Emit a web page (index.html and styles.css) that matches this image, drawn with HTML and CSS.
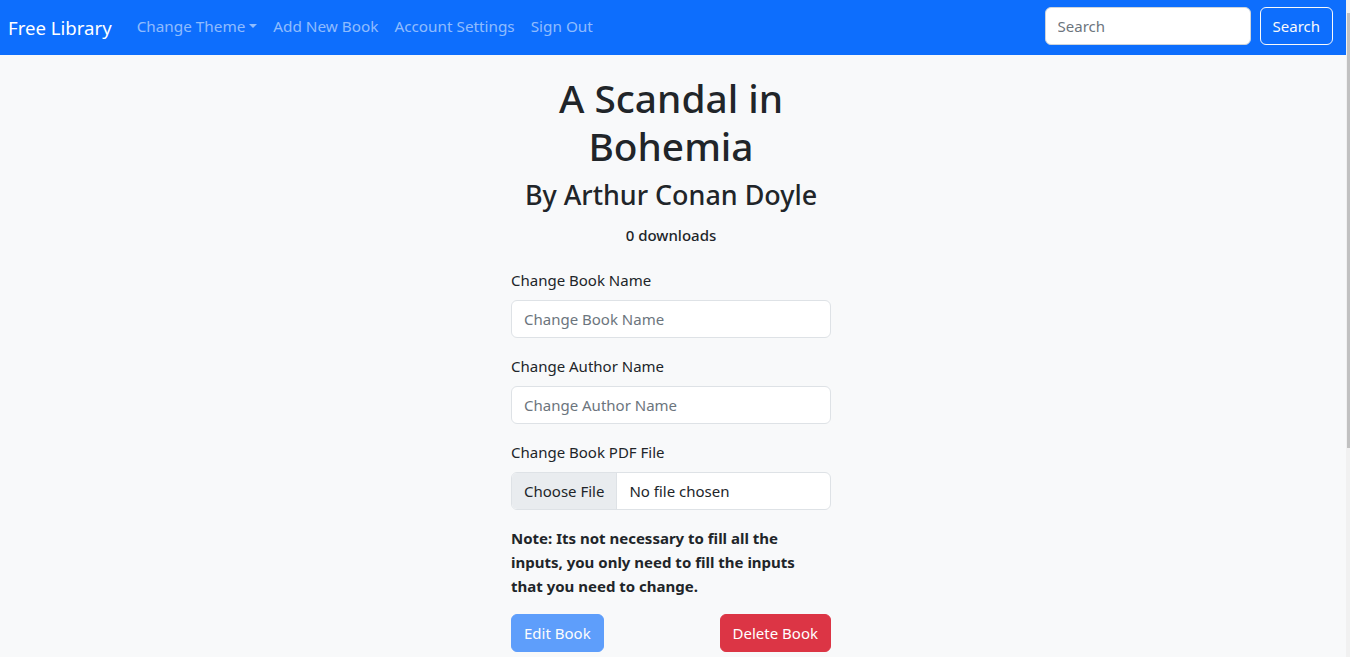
FILE: index.html
```html
<!DOCTYPE html>
<html lang="en">
<head>
<meta charset="utf-8">
<title>Free Library - A Scandal in Bohemia</title>
<link rel="stylesheet" href="styles.css">
</head>
<body>
<div class="page">
  <nav class="navbar">
    <a class="brand" href="#">Free Library</a>
    <ul class="nav-links">
      <li><a class="nav-link dropdown-toggle" href="#">Change Theme</a></li>
      <li><a class="nav-link" href="#">Add New Book</a></li>
      <li><a class="nav-link" href="#">Account Settings</a></li>
      <li><a class="nav-link" href="#">Sign Out</a></li>
    </ul>
    <form class="search-form">
      <input class="search-input" type="search" placeholder="Search">
      <button class="btn btn-outline-light" type="button">Search</button>
    </form>
  </nav>
  <main class="content">
    <h1 class="title">A Scandal in Bohemia</h1>
    <h3 class="author">By Arthur Conan Doyle</h3>
    <h6 class="downloads">0 downloads</h6>
    <form class="edit-form">
      <div class="field">
        <label class="form-label">Change Book Name</label>
        <input class="form-control" type="text" placeholder="Change Book Name">
      </div>
      <div class="field">
        <label class="form-label">Change Author Name</label>
        <input class="form-control" type="text" placeholder="Change Author Name">
      </div>
      <div class="field">
        <label class="form-label">Change Book PDF File</label>
        <div class="file-control">
          <span class="file-button">Choose File</span>
          <span class="file-name">No file chosen</span>
        </div>
      </div>
      <p class="note">Note: Its not necessary to fill all the inputs, you only need to fill the inputs that you need to change.</p>
      <div class="actions">
        <button class="btn btn-primary" type="button" disabled>Edit Book</button>
        <button class="btn btn-danger" type="button">Delete Book</button>
      </div>
    </form>
  </main>
</div>
<div class="scrollbar"><div class="thumb"></div></div>
</body>
</html>
```

FILE: styles.css
```css
* { box-sizing: border-box; }
html, body { height: 100%; }
body {
  margin: 0;
  display: flex;
  overflow: hidden;
  background: #f8f9fa;
  color: #212529;
  font-family: "Noto Sans", "Open Sans", sans-serif;
  font-size: 15px;
  line-height: 24px;
}
.page {
  flex: 1;
  min-width: 0;
  display: flex;
  flex-direction: column;
}
.scrollbar {
  width: 4px;
  background: #f1f1f1;
  padding-top: 13px;
  padding-left: 1px;
}
.thumb {
  height: 435px;
  background: #c1c1c1;
}
.navbar {
  height: 55px;
  flex: none;
  background: #0d6efd;
  display: flex;
  align-items: center;
  padding: 0 13px 3px 8px;
}
.brand {
  color: #fff;
  text-decoration: none;
  font-size: 18.6px;
  line-height: 30px;
  margin-right: 17px;
  padding-top: 3px;
}
.nav-links {
  list-style: none;
  margin: 0;
  padding: 0;
  display: flex;
  flex: 1;
}
.nav-link {
  display: block;
  padding: 8px;
  font-size: 15.3px;
  color: rgba(255,255,255,.55);
  text-decoration: none;
  margin-top: -1px;
}
.dropdown-toggle::after {
  content: "";
  display: inline-block;
  margin-left: .255em;
  vertical-align: .255em;
  border-top: .3em solid;
  border-right: .3em solid transparent;
  border-left: .3em solid transparent;
}
.search-form {
  display: flex;
  gap: 9px;
}
.search-input {
  width: 206px;
  height: 38px;
  padding: 6px 12px;
  border: 1px solid #ced4da;
  border-radius: 6px;
  font: inherit;
  color: #212529;
  background: #fff;
}
.search-input::placeholder { color: #6c757d; }
.btn {
  display: inline-block;
  height: 38px;
  padding: 6px 12px;
  font: inherit;
  border: 1px solid transparent;
  border-radius: 6px;
  background: transparent;
  cursor: pointer;
}
.btn-outline-light { color: #f8f9fa; border-color: #f8f9fa; }
.btn-primary { color: #fff; background: #0d6efd; border-color: #0d6efd; }
.btn-primary:disabled { opacity: .65; }
.btn-danger { color: #fff; background: #dc3545; border-color: #dc3545; }
.content {
  width: 320px;
  margin: 0 auto;
  position: relative;
  left: -2px;
  padding-top: 19px;
  text-align: center;
}
.title {
  margin: 0 0 8px;
  font-size: 38.8px;
  font-weight: 500;
  line-height: 48px;
}
.author {
  margin: 0 0 11px;
  font-size: 26.9px;
  font-weight: 500;
  line-height: 34px;
}
.downloads {
  margin: 0 0 21px;
  font-size: 15px;
  font-weight: 500;
  line-height: 24px;
}
.edit-form { text-align: left; }
.field { margin-bottom: 16px; }
.form-label {
  display: block;
  margin-bottom: 8px;
}
.form-control {
  display: block;
  width: 100%;
  height: 38px;
  padding: 6px 12px;
  font: inherit;
  color: #212529;
  background: #fff;
  border: 1px solid #dee2e6;
  border-radius: 6px;
}
.form-control::placeholder { color: #6c757d; }
.file-control {
  display: flex;
  height: 38px;
  background: #fff;
  border: 1px solid #dee2e6;
  border-radius: 6px;
  overflow: hidden;
}
.file-button {
  display: flex;
  align-items: center;
  padding: 0 12px;
  background: #e9ecef;
  border-right: 1px solid #dee2e6;
}
.file-name {
  display: flex;
  align-items: center;
  padding-left: 12px;
}
.note {
  margin: 0 0 16px;
  padding-right: 14px;
  font-weight: 700;
}
.actions {
  display: flex;
  justify-content: space-between;
}
```
